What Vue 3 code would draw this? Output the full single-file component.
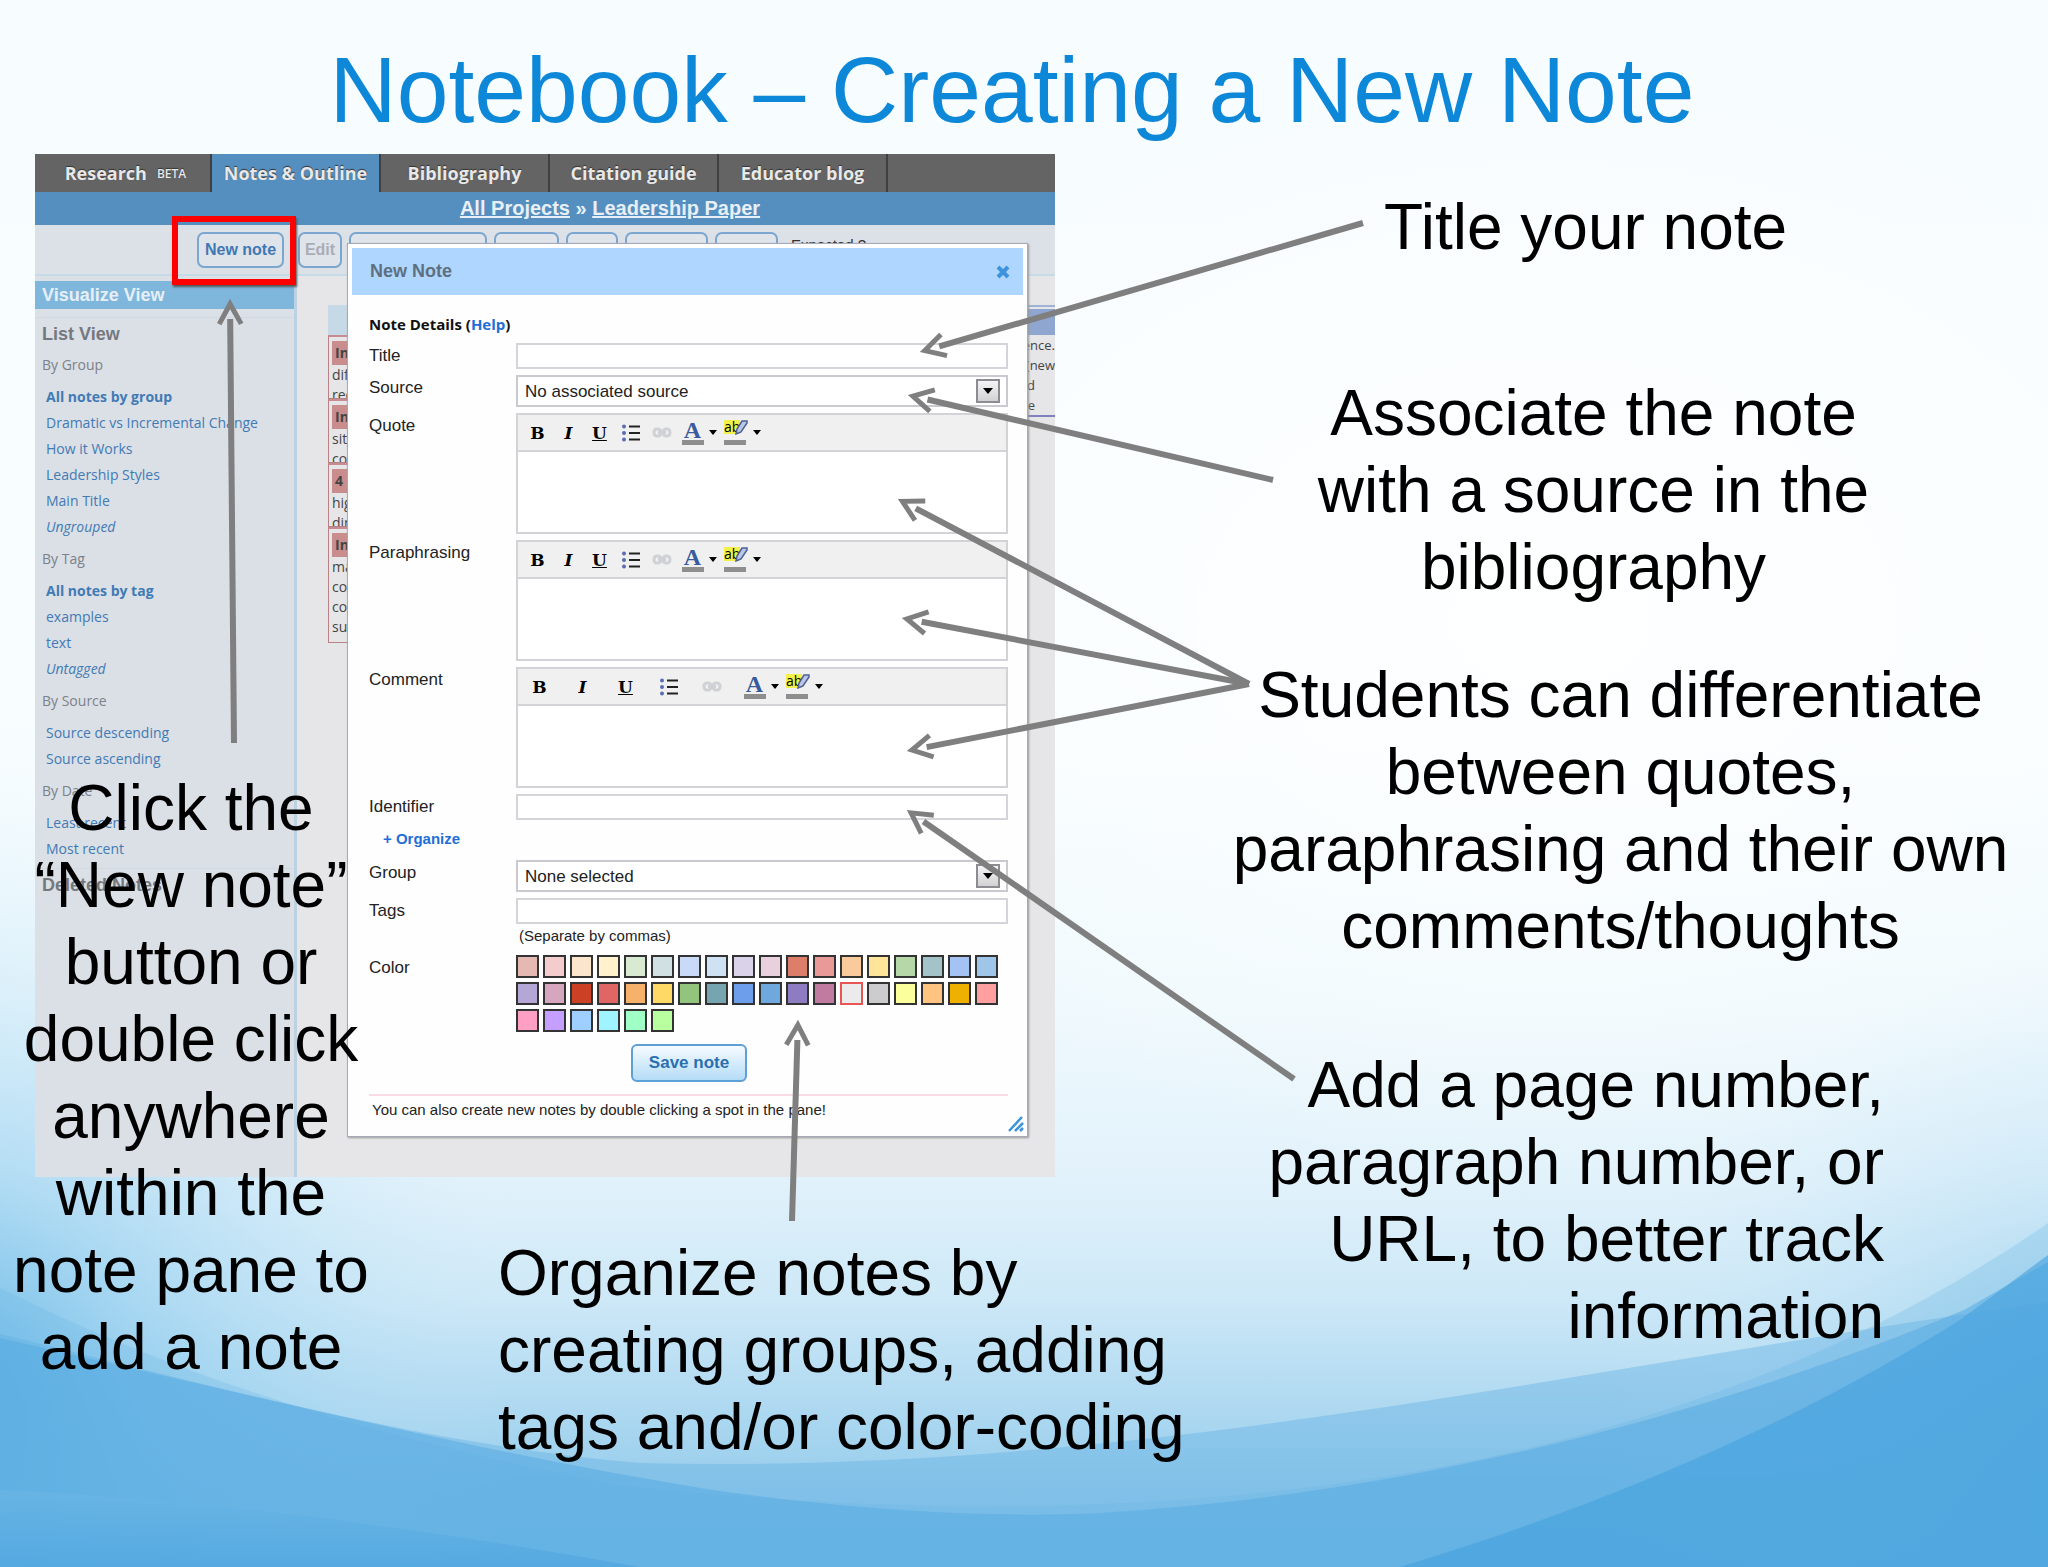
<template>
  <main class="slide">
    <!-- wave background -->
    <svg class="backdrop" viewBox="0 0 2048 1567" preserveAspectRatio="none" aria-hidden="true">
      <defs>
        <linearGradient id="sky" x1="0" y1="0" x2="0" y2="1">
          <stop offset="0" stop-color="#f7fcff" />
          <stop offset="0.45" stop-color="#f8fdff" />
          <stop offset="0.64" stop-color="#eff9fd" />
          <stop offset="0.75" stop-color="#e2f2fb" />
          <stop offset="0.83" stop-color="#cde8f7" />
          <stop offset="0.95" stop-color="#97cdec" />
          <stop offset="1" stop-color="#8ac6ea" />
        </linearGradient>
        <radialGradient id="leftGlow" gradientUnits="userSpaceOnUse" cx="0" cy="0" r="1" gradientTransform="translate(-60 1400) scale(580 640)">
          <stop offset="0" stop-color="#4ba9e2" stop-opacity="0.85" />
          <stop offset="0.35" stop-color="#7fc5ec" stop-opacity="0.5" />
          <stop offset="1" stop-color="#cfeaf8" stop-opacity="0" />
        </radialGradient>
        <radialGradient id="rightGlow" gradientUnits="userSpaceOnUse" cx="0" cy="0" r="1" gradientTransform="translate(2120 1440) scale(520 500)">
          <stop offset="0" stop-color="#59b0e4" stop-opacity="0.6" />
          <stop offset="0.4" stop-color="#8fcbec" stop-opacity="0.35" />
          <stop offset="1" stop-color="#d5ecf8" stop-opacity="0" />
        </radialGradient>
        <radialGradient id="topGlow" gradientUnits="userSpaceOnUse" cx="0" cy="0" r="1" gradientTransform="translate(1550 620) scale(800 560)">
          <stop offset="0" stop-color="#ffffff" stop-opacity="0.9" />
          <stop offset="1" stop-color="#ffffff" stop-opacity="0" />
        </radialGradient>
        <linearGradient id="deep" x1="0" y1="0" x2="0" y2="1">
          <stop offset="0" stop-color="#6cb6e5" />
          <stop offset="1" stop-color="#4aa4df" />
        </linearGradient>
      </defs>
      <rect width="2048" height="1567" fill="url(#sky)" />
      <rect width="2048" height="1567" fill="url(#topGlow)" />
      <rect width="2048" height="1567" fill="url(#leftGlow)" />
      <rect width="2048" height="1567" fill="url(#rightGlow)" />
      <path d="M0 1288C180 1378 380 1440 620 1485C1120 1540 1650 1500 2048 1223V1567H0Z" fill="#6fb8e6" opacity="0.3" />
      <path d="M0 1334C200 1382 420 1445 640 1463C1140 1475 1560 1370 2048 1302V1567H0Z" fill="#62b0e4" opacity="0.4" />
      <path d="M0 1338C250 1395 480 1452 700 1488C860 1512 1000 1518 1100 1513C1400 1495 1700 1420 1964 1310L2048 1262V1567H0Z" fill="#58abe2" opacity="0.55" />
      <path d="M1400 1567C1620 1500 1800 1420 1960 1320L2048 1255V1567Z" fill="#45a2de" opacity="0.6" />
      <path d="M0 1490C220 1500 430 1530 640 1567H0Z" fill="url(#deep)" opacity="0.6" />
    </svg>

    <h1>Notebook – Creating a New Note</h1>

    <div class="columns">
      <div class="left">
        <section class="app">
          <nav class="tabs">
            <a href="#" class="tab research">Research <small>BETA</small></a>
            <a href="#" class="tab active">Notes &amp; Outline</a>
            <a href="#" class="tab">Bibliography</a>
            <a href="#" class="tab">Citation guide</a>
            <a href="#" class="tab">Educator blog</a>
          </nav>
          <div class="crumbs"><a href="#">All Projects</a> » <a href="#">Leadership Paper</a></div>

          <div class="toolbar">
            <span class="highlighted"><button type="button" class="tool new">New note</button></span>
            <button type="button" class="tool" disabled>Edit</button>
            <button v-for="w in hiddenTools" :key="w" type="button" class="tool" :style="{ width: w + 'px' }" aria-label="Tool"></button>
            <span class="tool-note">Expected ?</span>
          </div>

          <div class="workspace">
            <aside class="sidebar">
              <h2 class="view-title">Visualize View</h2>
              <h3>List View</h3>
              <template v-for="group in groups" :key="group.name">
                <h4>{{ group.name }}</h4>
                <ul>
                  <li v-for="(item, i) in group.items" :key="item">
                    <a href="#" :class="{ strong: i === 0 && group.hasAll, soft: item.startsWith('Un') }">{{ item }}</a>
                  </li>
                </ul>
              </template>
              <h3 class="deleted">Deleted Notes</h3>
            </aside>

            <div class="pane">
              <div class="stack">
                <div class="stack-head"></div>
                <div v-for="(card, i) in cards" :key="i" class="card">
                  <b>{{ card.head }}</b>
                  <p v-for="line in card.lines" :key="line">{{ line }}</p>
                </div>
              </div>
              <div class="side-card">
                <div class="side-head"></div>
                <p>evidence.</p>
                <p>(new</p>
                <p>and</p>
                <p>the</p>
              </div>
            </div>
          </div>

          <!-- New Note dialog -->
          <form class="dialog" @submit.prevent>
            <header>
              <span>New Note</span>
              <button type="button" class="close" aria-label="Close">
                <svg viewBox="0 0 14 14"><path d="M2 2L12 12M12 2L2 12" stroke="#3d94dc" stroke-width="4" /></svg>
              </button>
            </header>
            <div class="body">
              <p class="details">Note Details (<a href="#">Help</a>)</p>
              <div class="fields">
                <label for="title">Title</label>
                <input id="title" v-model="note.title" type="text" />

                <label for="source">Source</label>
                <div class="select">
                  <select id="source"><option>No associated source</option></select>
                  <i></i>
                </div>

                <template v-for="field in editors" :key="field.id">
                  <label :for="field.id">{{ field.label }}</label>
                  <div class="editor" :class="{ wide: field.wide }">
                    <div class="editor-tools">
                      <button type="button" class="bold">B</button>
                      <button type="button" class="italic">I</button>
                      <button type="button" class="under">U</button>
                      <button type="button" aria-label="List">
                        <svg width="18" height="18" viewBox="0 0 18 18">
                          <path d="M7 2.500H18M7 9H18M7 15.500H18" stroke="#222" stroke-width="2" />
                          <g fill="#5a6cb4"><circle cx="2" cy="2.500" r="2" /><circle cx="2" cy="9" r="2" /><circle cx="2" cy="15.500" r="2" /></g>
                        </svg>
                      </button>
                      <button type="button" aria-label="Link">
                        <svg width="20" height="12" viewBox="0 0 20 12" fill="none" stroke="#cfd1d6" stroke-width="3">
                          <rect x="2" y="2" width="7" height="7" rx="3" /><rect x="11" y="2" width="7" height="7" rx="3" /><path d="M6 5.500H14" />
                        </svg>
                      </button>
                      <button type="button" class="ink"><span>A</span></button>
                      <svg class="caret" width="8" height="5" viewBox="0 0 8 5"><path d="M0 0H8L4 5Z" /></svg>
                      <button type="button" class="marker">
                        <span>ab</span>
                        <svg width="13" height="15" viewBox="0 0 13 15"><path d="M7 1H12V3L6 12L1 14L2 9Z" fill="#b9c6e6" stroke="#4d5f96" stroke-width="1.500" /></svg>
                      </button>
                      <svg class="caret" width="8" height="5" viewBox="0 0 8 5"><path d="M0 0H8L4 5Z" /></svg>
                    </div>
                    <textarea :id="field.id"></textarea>
                  </div>
                </template>

                <label for="identifier">Identifier</label>
                <input id="identifier" v-model="note.identifier" type="text" />

                <a href="#" class="organize">+ Organize</a>

                <label for="group">Group</label>
                <div class="select">
                  <select id="group"><option>None selected</option></select>
                  <i></i>
                </div>

                <label for="tags">Tags</label>
                <div>
                  <input id="tags" v-model="note.tags" type="text" />
                  <p class="hint">(Separate by commas)</p>
                </div>

                <span class="label">Color</span>
                <div class="swatches">
                  <button
                    v-for="c in colors"
                    :key="c"
                    type="button"
                    :class="{ picked: c === note.color }"
                    :style="{ background: c }"
                    :aria-label="c"
                    @click="note.color = c"
                  ></button>
                </div>
              </div>
              <button type="submit" class="save">Save note</button>
              <p class="tip">You can also create new notes by double clicking a spot in the pane!</p>
            </div>
            <svg class="grip" viewBox="0 0 16 16"><path d="M1 15L14 1M7 15L15 7M12 15L15 12" stroke="#3d94dc" stroke-width="2.500" /></svg>
          </form>
        </section>

        <p class="callout organize-note">Organize notes by<br />creating groups, adding<br />tags and/or color-coding</p>
      </div>

      <div class="right">
        <p class="callout title-note">Title your note</p>
        <p class="callout source-note">Associate the note<br />with a source in the<br />bibliography</p>
        <p class="callout quote-note">Students can differentiate<br />between quotes,<br />paraphrasing and their own<br />comments/thoughts</p>
        <p class="callout page-note">Add a page number,<br />paragraph number, or<br />URL, to better track<br />information</p>
      </div>
    </div>

    <p class="callout click-note">Click the<br />“New note”<br />button or<br />double click<br />anywhere<br />within the<br />note pane to<br />add a note</p>

    <!-- arrows from the callouts to the form -->
    <svg class="arrows" viewBox="0 0 2048 1567" preserveAspectRatio="none" aria-hidden="true">
      <g v-for="(a, i) in arrows" :key="i">
        <path :d="a.shaft" stroke-width="6" />
        <path :d="a.head" stroke-width="5" />
      </g>
    </svg>
  </main>
</template>

<script setup>
import { reactive } from "vue";

const note = reactive({ title: "", identifier: "", tags: "", color: "#ebebeb" });

const hiddenTools = [138, 65, 52, 83, 63];

const groups = [
  {
    name: "By Group",
    hasAll: true,
    items: ["All notes by group", "Dramatic vs Incremental Change", "How it Works", "Leadership Styles", "Main Title", "Ungrouped"]
  },
  { name: "By Tag", hasAll: true, items: ["All notes by tag", "examples", "text", "Untagged"] },
  { name: "By Source", items: ["Source descending", "Source ascending"] },
  { name: "By Date", items: ["Least recent", "Most recent"] }
];

const cards = [
  { head: "In", lines: ["dif", "rec"] },
  { head: "In", lines: ["sit", "co"] },
  { head: "4", lines: ["hig", "din"] },
  { head: "In", lines: ["ma", "con", "col", "su"] }
];

const editors = [
  { id: "quote", label: "Quote" },
  { id: "paraphrasing", label: "Paraphrasing" },
  { id: "comment", label: "Comment", wide: true }
];

const colors = [
  "#e6b8b2", "#f4cccd", "#fce5cd", "#fff2cc", "#d9ead3", "#d0e0e3", "#c9daf8", "#cfe2f3", "#d9d2e9",
  "#e8d1dc", "#dd7e6b", "#ea9999", "#f9cb9c", "#ffe599", "#b6d7a8", "#a2c4c9", "#a4c2f4", "#9fc5e8",
  "#b4a7d6", "#d5a6bd", "#cc4125", "#e06666", "#f6b26b", "#ffd966", "#93c47d", "#76a5af", "#6d9eeb",
  "#6fa8dc", "#8e7cc3", "#c27ba0", "#ebebeb", "#cccbcd", "#fbff9c", "#ffc482", "#efb000", "#ff9f9f",
  "#ff9fc4", "#c49fff", "#9fcfff", "#9ff4ff", "#9fffc4", "#b9ff9f"
];

// [tail x, tail y, tip x, tip y]
const arrows = [
  [1363, 223, 920, 352],
  [1273, 480, 908, 395],
  [1249, 684, 898, 499],
  [1249, 684, 902, 618],
  [1249, 684, 907, 751],
  [1294, 1079, 907, 810],
  [792, 1221, 798, 1020],
  [234, 743, 230, 299]
].map(([x1, y1, x2, y2]) => {
  const len = Math.hypot(x1 - x2, y1 - y2);
  const ux = (x1 - x2) / len;
  const uy = (y1 - y2) / len;
  const at = (back, side) => `${x2 + ux * back - uy * side} ${y2 + uy * back + ux * side}`;
  return {
    shaft: `M${x1} ${y1}L${at(20, 0)}`,
    head: `M${at(25, 11)}L${at(5, 0)}L${at(25, -11)}`
  };
});
</script>

<style>
body {
  margin: 0;
}
</style>

<style scoped>
.slide {
  position: relative;
  min-height: 100vh;
  overflow: hidden;
  font-family: "Liberation Sans", Arial, sans-serif;
  color: #000;
}

.slide *,
.slide {
  box-sizing: border-box;
}

.backdrop,
.arrows {
  position: absolute;
  inset: 0;
  width: 100%;
  height: 100%;
}

.arrows {
  pointer-events: none;
  fill: none;
  stroke: #7f7f80;
}

h1, h2, h3, h4, p, ul {
  margin: 0;
  padding: 0;
  font-weight: normal;
}

a {
  color: inherit;
  text-decoration: none;
}

button {
  padding: 0;
  font-family: inherit;
}

h1 {
  position: relative;
  padding: 36px 24px 10px 0;
  font-size: 93px;
  line-height: 108px;
  text-align: center;
  color: #0d88d8;
}

.columns {
  position: relative;
  display: grid;
  grid-template-columns: 1020fr 993fr;
  padding-left: 35px;
}

.left,
.right {
  min-width: 0;
}

.callout {
  font-size: 64px;
  line-height: 77px;
  text-align: center;
  white-space: nowrap;
}

.title-note {
  padding: 35px 0 0 329px;
  text-align: left;
}

.source-note {
  padding: 109px 0 0 84px;
}

.quote-note {
  padding: 51px 0 0 138px;
}

.page-note {
  padding: 82px 164px 0 0;
  text-align: right;
}

.organize-note {
  padding: 58px 0 0 463px;
  text-align: left;
}

.click-note {
  position: absolute;
  left: 0;
  top: 770px;
  width: 382px;
}

/* notebook application */
.app {
  position: relative;
  display: flex;
  flex-direction: column;
  min-height: 1023px;
  overflow: hidden;
  background: #e6e6e8;
}

.tabs {
  display: flex;
  height: 38px;
  background: #646465;
  font-family: "Open Sans", sans-serif;
  font-weight: 700;
  font-size: 18px;
}

.tab {
  display: flex;
  align-items: center;
  justify-content: center;
  gap: 10px;
  width: 169px;
  border-right: 2px solid #404042;
  color: #e8e8e8;
  text-shadow: 0 -1px 1px #333;
}

.tab small {
  font-size: 12px;
  font-weight: 600;
}

.research {
  width: 177px;
  padding-left: 6px;
}

.active {
  background: #558fc0;
}

.crumbs {
  height: 33px;
  background: #558fc0;
  font-size: 20px;
  font-weight: bold;
  line-height: 33px;
  padding-left: 130px;
  text-align: center;
  color: #e8eff6;
}

.crumbs a {
  text-decoration: underline;
}

.toolbar {
  display: flex;
  gap: 7px;
  height: 51px;
  padding: 7px 0 0 162px;
  border-bottom: 2px solid #c5dce8;
  background: #dce0e7;
}

.tool {
  flex: none;
  width: 44px;
  height: 36px;
  border: 2px solid #7ba6cf;
  border-radius: 7px;
  background: #dfe3ea;
  font-size: 16px;
  font-weight: bold;
  color: #3f78b4;
}

.tool.new {
  width: 87px;
}

.tool:disabled {
  color: #a9adb4;
}

.highlighted {
  position: relative;
  margin-right: 7px;
}

.highlighted::after {
  content: "";
  position: absolute;
  inset: -16px -12px -11px -25px;
  border: 6px solid #fe0000;
  box-shadow: 1px 2px 2px #555;
  pointer-events: none;
}

.tool-note {
  padding: 4px 0 0 6px;
  font-size: 15px;
  color: #333;
}

.workspace {
  flex: 1;
  display: flex;
}

.sidebar {
  width: 262px;
  padding-top: 5px;
  border-right: 3px solid #bcd2e3;
  background: #dbdfe6;
  font-family: "Open Sans", sans-serif;
  font-size: 14px;
  line-height: 26px;
}

.view-title {
  margin-bottom: 8px;
  padding-left: 7px;
  background: #7fb6dc;
  font: bold 18px/28px "Liberation Sans", sans-serif;
  color: #e6eff6;
}

.sidebar h3 {
  padding: 3px 0 5px 7px;
  border-top: 1px solid #cfdae4;
  font: bold 18px/26px "Liberation Sans", sans-serif;
  color: #74797f;
}

.sidebar h4 {
  padding-left: 7px;
  font-size: 14px;
  color: #7d8288;
}

.sidebar ul {
  margin: 6px 0;
  padding-left: 11px;
  list-style: none;
  color: #417bb5;
}

.sidebar li a {
  white-space: nowrap;
}

.strong {
  font-weight: bold;
}

.soft {
  font-style: italic;
}

.pane {
  flex: 1;
  display: flex;
  justify-content: space-between;
  padding: 29px 0 0 31px;
  font-family: "Open Sans", sans-serif;
  font-size: 14px;
  line-height: 20px;
  color: #444;
}

.stack {
  width: 60px;
}

.stack-head {
  height: 30px;
  background: #c6d9e6;
}

.card {
  height: 64px;
  padding: 4px 3px 0;
  border: 1px solid #b88087;
  border-top: 2px solid #c58c92;
  overflow: hidden;
}

.card:last-child {
  height: 116px;
}

.card b {
  display: block;
  padding-left: 3px;
  background: #c98d8e;
  line-height: 24px;
}

.side-card {
  align-self: flex-start;
  width: 78px;
  overflow: hidden;
  border-top: 2px solid #9fb2d8;
  border-bottom: 2px solid #8080c0;
  font-size: 13px;
}

.side-card p {
  text-align: right;
}

.side-card p:nth-child(n + 4) {
  padding-right: 20px;
}

.side-head {
  height: 26px;
  margin: 2px 0 0;
  background: #8ea6d0;
}

/* dialog */
.dialog {
  position: absolute;
  top: 89px;
  left: 312px;
  right: 27px;
  padding: 4px;
  border: 1px solid #a5a9b8;
  background: #fefefe;
  box-shadow: 1px 1px 2px #999;
}

.dialog header {
  display: flex;
  align-items: center;
  justify-content: space-between;
  height: 47px;
  padding: 0 13px 0 18px;
  background: #aed6ff;
  font-size: 18px;
  font-weight: bold;
  color: #5e7080;
}

.close {
  width: 14px;
  height: 14px;
  border: 0;
  background: none;
}

.close svg {
  display: block;
}

.body {
  padding: 18px 15px 12px 17px;
  color: #222;
}

.details {
  margin-bottom: 8px;
  font: bold 15px/22px "Open Sans", sans-serif;
  color: #111;
}

.details a,
.organize {
  color: #1f6fd6;
}

.fields {
  display: grid;
  grid-template-columns: 141px 1fr;
  column-gap: 6px;
  row-gap: 6px;
  font-size: 17px;
}

.fields label,
.label {
  line-height: 26px;
}

.fields input {
  display: block;
  width: 100%;
  height: 26px;
  border: 2px solid #d5d4da;
  background: #fff;
}

.select {
  position: relative;
}

.select select {
  display: block;
  width: 100%;
  height: 32px;
  padding: 0 7px;
  border: 2px solid #cac9d0;
  border-radius: 0;
  background: #fff;
  appearance: none;
  font-family: inherit;
  font-size: 17px;
  color: #222;
}

.select i {
  position: absolute;
  top: 4px;
  right: 8px;
  display: grid;
  place-items: center;
  width: 24px;
  height: 24px;
  border: 2px solid #8b8d92;
  background: linear-gradient(#f4f4f4, #d2d2d4);
  pointer-events: none;
}

.select i::after {
  content: "";
  border: 5px solid transparent;
  border-top: 6px solid #000;
  border-bottom: 0;
}

.editor {
  height: 121px;
  border: 2px solid #d3d2d7;
}

.editor-tools {
  display: flex;
  align-items: center;
  height: 37px;
  padding-left: 4px;
  border-bottom: 2px solid #d3d2d7;
  background: #f0f0f0;
}

.editor-tools button {
  display: grid;
  place-items: center;
  flex: none;
  width: 31px;
  height: 30px;
  border: 0;
  background: none;
  font-family: "DejaVu Serif", serif;
  font-size: 17px;
  font-weight: bold;
  line-height: 20px;
  color: #000;
}

.editor-tools .italic {
  font-style: italic;
}

.editor-tools .under {
  text-decoration: underline;
}

.wide .editor-tools {
  padding-left: 0;
}

.wide .editor-tools button {
  width: 43px;
}

.wide .editor-tools .ink {
  margin-right: -6px;
}

.editor-tools .ink span {
  width: 22px;
  height: 25px;
  border-bottom: 5px solid #8e8e8e;
  font-family: "Liberation Serif", serif;
  font-size: 24px;
  color: #3a5a9e;
}

.editor-tools .caret {
  flex: none;
  margin-left: 1px;
}

.editor-tools .marker,
.wide .editor-tools .marker {
  display: flex;
  align-items: flex-start;
  width: 22px;
  height: 25px;
  margin: 0 6px 0 7px;
  border-bottom: 5px solid #8e8e8e;
  font-family: "Open Sans", sans-serif;
  font-size: 14px;
  font-weight: normal;
  line-height: 14px;
}

.marker span {
  background: #f2f04a;
}

.marker svg {
  flex: none;
  margin-left: -5px;
}

.editor textarea {
  display: block;
  width: 100%;
  height: 80px;
  border: 0;
  background: #fff;
  resize: none;
}

.organize {
  grid-column: 1 / -1;
  padding: 2px 0 4px 14px;
  font: bold 15px/22px "Liberation Sans", sans-serif;
}

.hint {
  padding: 2px 0 3px 3px;
  font-size: 15px;
  line-height: 20px;
}

.swatches {
  display: flex;
  flex-wrap: wrap;
  gap: 4px;
}

.swatches button {
  width: 23px;
  height: 23px;
  border: 2px solid #333;
}

.swatches .picked {
  border-color: #e85555;
}

.save {
  display: block;
  width: 116px;
  height: 38px;
  margin: 12px 0 12px 262px;
  border: 2px solid #5e9fd6;
  border-radius: 6px;
  background: linear-gradient(#f6fbff, #b4dcf7);
  font-size: 17px;
  font-weight: bold;
  color: #2a70b0;
}

.tip {
  padding: 4px 0 0 3px;
  border-top: 2px solid #f9dce3;
  font-size: 15px;
  line-height: 20px;
}

.grip {
  position: absolute;
  right: 3px;
  bottom: 4px;
  width: 16px;
  height: 16px;
}
</style>
